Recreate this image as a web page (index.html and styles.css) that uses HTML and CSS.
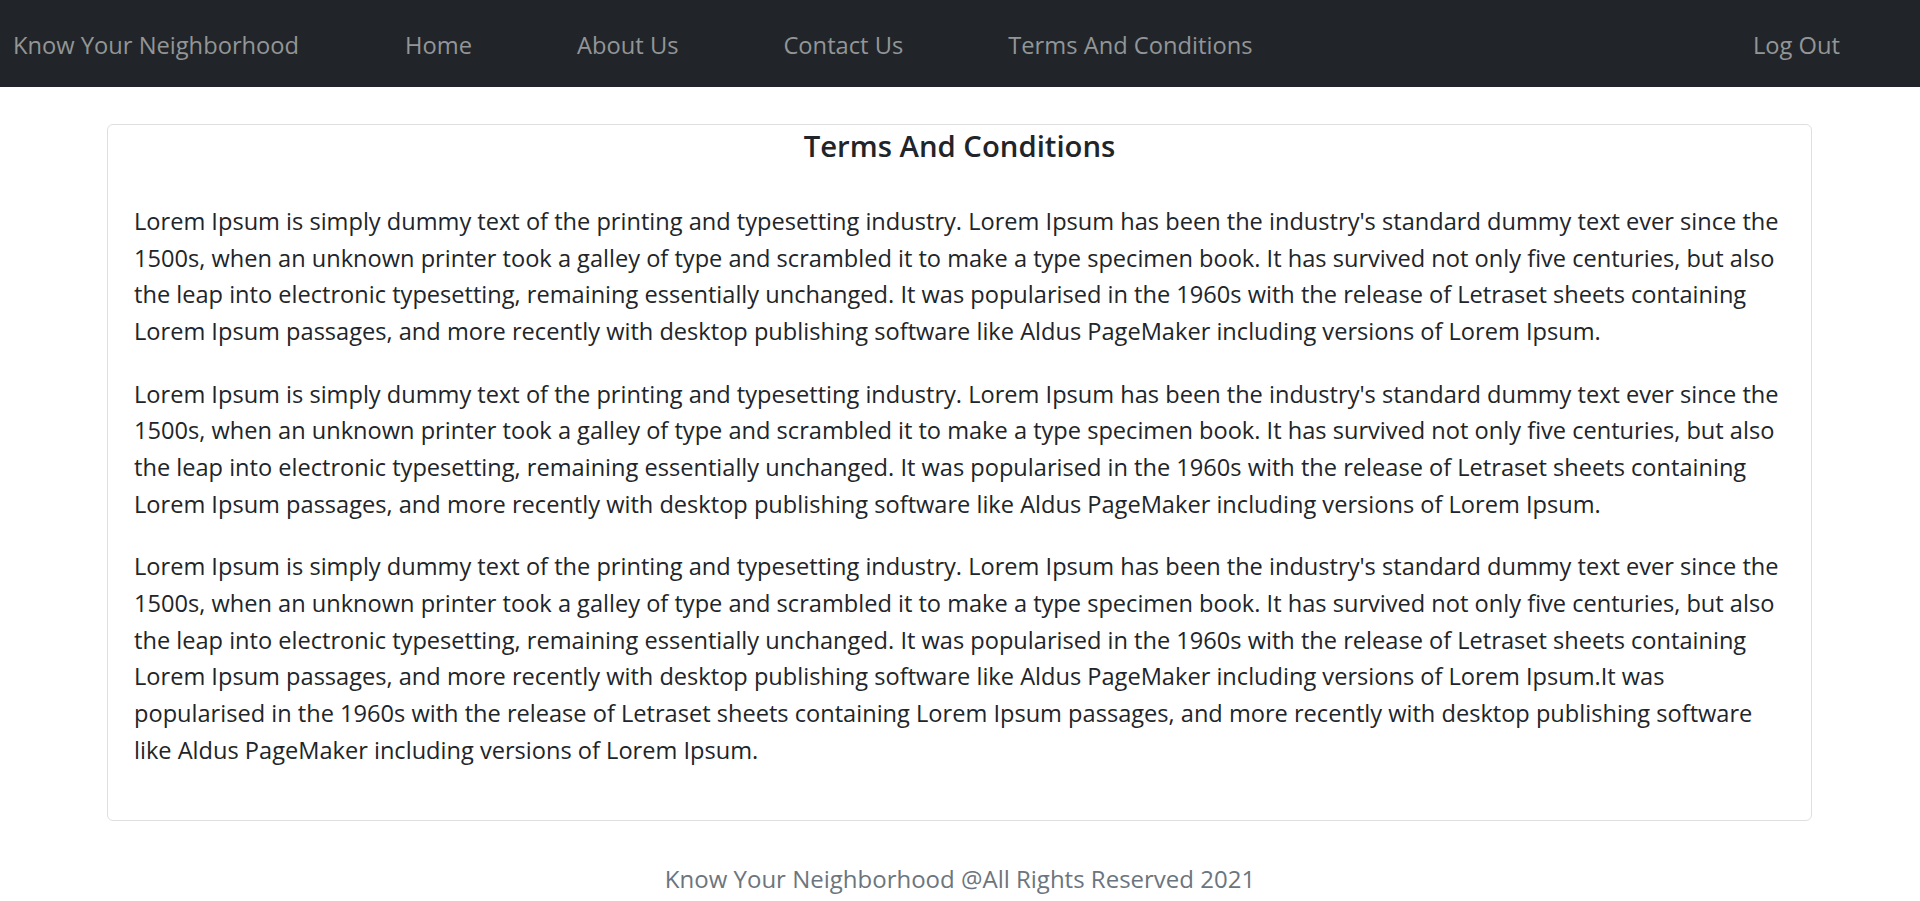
FILE: index.html
```html
<!DOCTYPE html>
<html lang="en">
<head>
<meta charset="utf-8">
<title>Terms And Conditions - Know Your Neighborhood</title>
<link rel="stylesheet" href="styles.css">
</head>
<body>
<nav class="navbar">
  <a class="brand" href="#">Know Your Neighborhood</a>
  <ul class="nav-links">
    <li><a href="#">Home</a></li>
    <li><a href="#">About Us</a></li>
    <li><a href="#">Contact Us</a></li>
    <li><a href="#">Terms And Conditions</a></li>
  </ul>
  <a class="logout" href="#">Log Out</a>
</nav>
<main class="page">
  <section class="card">
    <h2 class="card-title">Terms And Conditions</h2>
    <p>Lorem Ipsum is simply dummy text of the printing and typesetting industry. Lorem Ipsum has been the industry's standard dummy text ever since the 1500s, when an unknown printer took a galley of type and scrambled it to make a type specimen book. It has survived not only five centuries, but also the leap into electronic typesetting, remaining essentially unchanged. It was popularised in the 1960s with the release of Letraset sheets containing Lorem Ipsum passages, and more recently with desktop publishing software like Aldus PageMaker including versions of Lorem Ipsum.</p>
    <p>Lorem Ipsum is simply dummy text of the printing and typesetting industry. Lorem Ipsum has been the industry's standard dummy text ever since the 1500s, when an unknown printer took a galley of type and scrambled it to make a type specimen book. It has survived not only five centuries, but also the leap into electronic typesetting, remaining essentially unchanged. It was popularised in the 1960s with the release of Letraset sheets containing Lorem Ipsum passages, and more recently with desktop publishing software like Aldus PageMaker including versions of Lorem Ipsum.</p>
    <p>Lorem Ipsum is simply dummy text of the printing and typesetting industry. Lorem Ipsum has been the industry's standard dummy text ever since the 1500s, when an unknown printer took a galley of type and scrambled it to make a type specimen book. It has survived not only five centuries, but also the leap into electronic typesetting, remaining essentially unchanged. It was popularised in the 1960s with the release of Letraset sheets containing Lorem Ipsum passages, and more recently with desktop publishing software like Aldus PageMaker including versions of Lorem Ipsum.It was popularised in the 1960s with the release of Letraset sheets containing Lorem Ipsum passages, and more recently with desktop publishing software like Aldus PageMaker including versions of Lorem Ipsum.</p>
  </section>
</main>
<footer class="footer">Know Your Neighborhood @All Rights Reserved 2021</footer>
</body>
</html>
```

FILE: styles.css
```css
* { box-sizing: border-box; }

body {
  margin: 0;
  font-family: "Open Sans", "Noto Sans", "Liberation Sans", sans-serif;
  color: #212529;
  background: #fff;
}

a { text-decoration: none; }

.navbar {
  height: 87px;
  background: #212529;
  display: flex;
  align-items: center;
  padding: 2px 0 0 13px;
  font-size: 23.7px;
}

.navbar a {
  color: #939597;
  line-height: 30px;
  white-space: nowrap;
}

.nav-links {
  list-style: none;
  display: flex;
  gap: 105px;
  margin: 0 0 0 106px;
  padding: 0;
}

.logout {
  margin-left: auto;
  margin-right: 80px;
}

.page {
  padding-top: 37px;
}

.card {
  width: 1705px;
  margin: 0 auto 0 107px;
  border: 1px solid #dfdfdf;
  border-radius: 6px;
  padding: 2px 26px 25.5px;
}

.card-title {
  margin: 0 0 38px;
  text-align: center;
  font-size: 29.3px;
  font-weight: 600;
  line-height: 38px;
}

.card p {
  margin: 0 0 25.8px;
  font-size: 23.6px;
  line-height: 36.7px;
}

.footer {
  margin-top: 43px;
  text-align: center;
  color: #6c757d;
  font-size: 24px;
  line-height: 30px;
}
```
